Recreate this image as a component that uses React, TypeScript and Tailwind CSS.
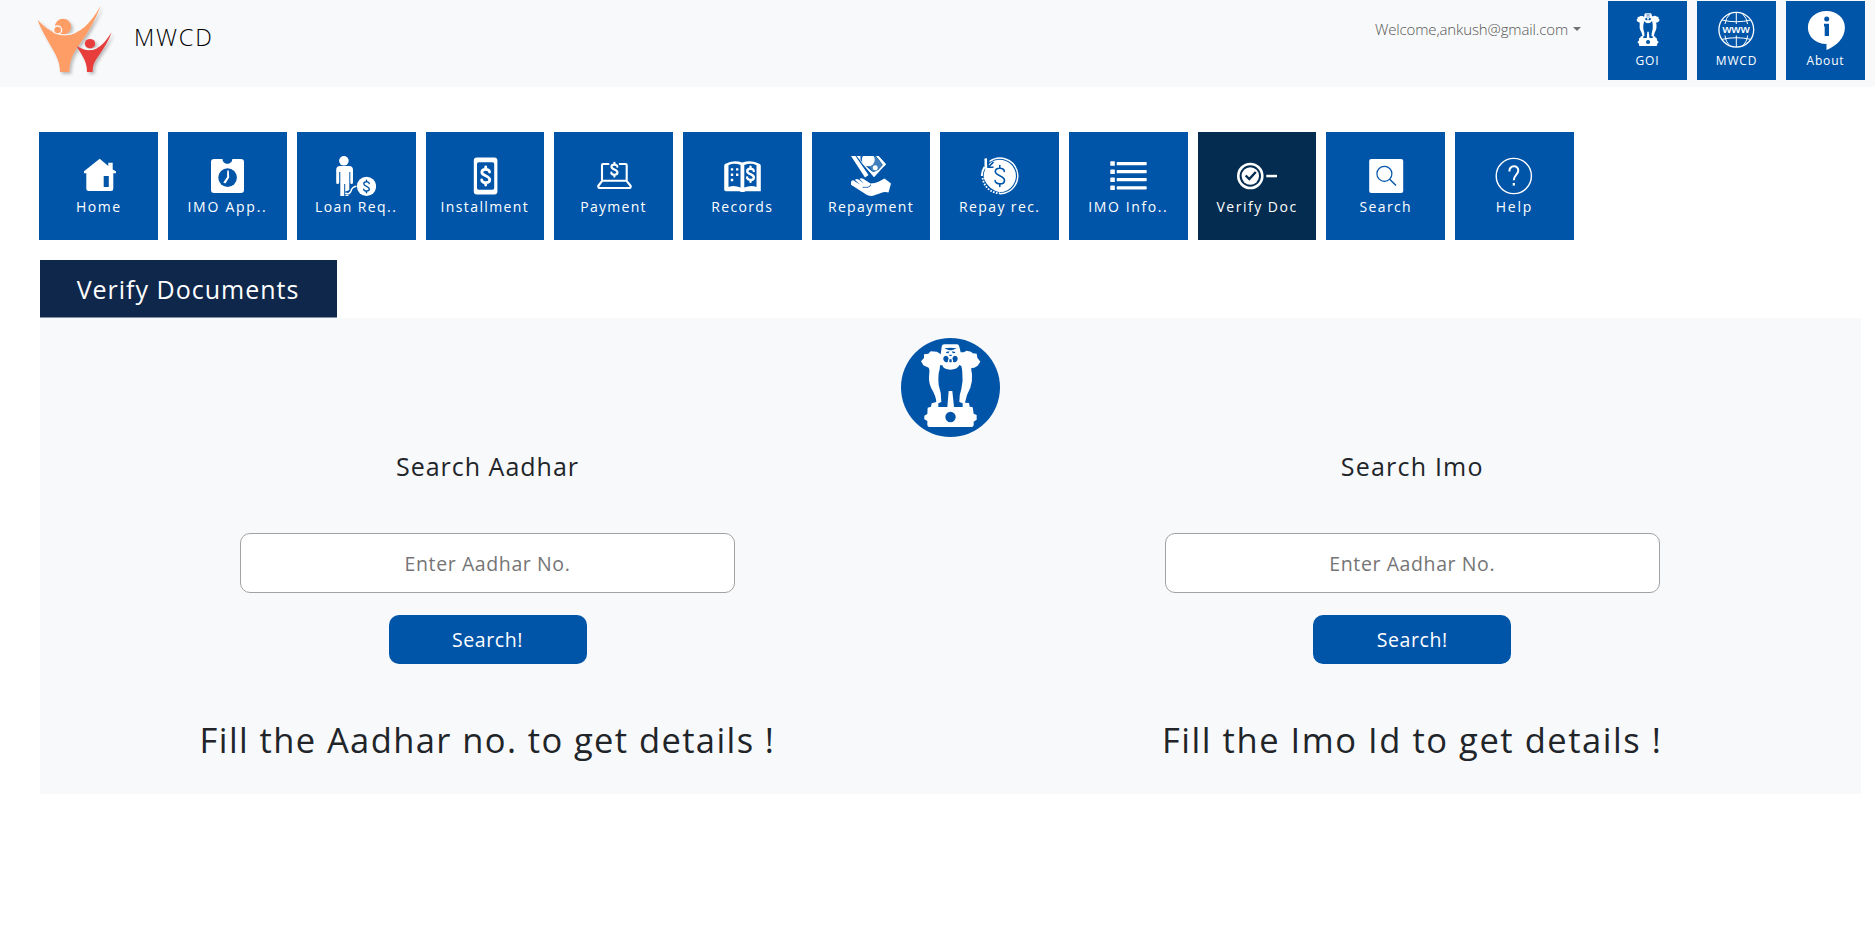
import React from "react";

const BLUE = "#0055a9";

function Logo() {
  return (
    <svg viewBox="105 9 240 222" className="block h-[74px] w-[80px]">
      <defs>
        <filter id="logo-shadow" x="-20%" y="-20%" width="140%" height="140%">
          <feDropShadow dx="6" dy="6" stdDeviation="5" floodColor="#333" floodOpacity="0.32" />
        </filter>
      </defs>
      <g filter="url(#logo-shadow)">
        <circle cx="189" cy="80" r="24" fill="#ff9d66" />
        <circle cx="173" cy="90" r="14" fill="#f8f9fa" />
        <circle cx="173" cy="90" r="10" fill="#ff9d66" />
        <path d="M113 59C135 84 158 101 195 106C238 104 271 72 302 17C284 67 258 105 239 132C217 164 209 181 208 216H180C180 182 166 162 146 127C127 92 118 76 113 59Z" fill="#ff9d66" />
        <path d="M160 97C178 107 210 107 228 96" fill="none" stroke="#f8f9fa" strokeWidth="3" />
      </g>
      <g filter="url(#logo-shadow)">
        <ellipse cx="270" cy="131" rx="15.500" ry="14" fill="#e73c3c" />
        <path d="M231 138C243 146 256 152 270 151C300 148 317 124 335 97C327 121 313 143 299 163C286 182 278 191 278 216H261C261 188 251 174 241 157C235 148 232 143 231 138Z" fill="#e73c3c" />
        <path d="M250 143C260 150 281 151 292 142" fill="none" stroke="#f8f9fa" strokeWidth="3" />
      </g>
    </svg>
  );
}

function EmblemShape() {
  return (
    <g>
      <path
        fill="#fff"
        d="M245 80Q246 73 253 73H290Q297 73 298 80L302 97L311 97L320 92L333 95L338 100L350 101L352 113L361 125L353 137L343 143L334 144Q333 152 336 161Q338 184 331 203Q318 226 315 248L327 249L329 260L338 262L341 281L350 285V299L341 305V315Q341 321 334 321H209Q202 321 202 315V303L193 298V287L202 282L203 263L213 260L215 250L229 246Q228 229 214 205Q204 184 208 159Q210 149 206 143L190 136L183 124L192 114V103L205 101L212 94L231 95L242 103Z"
      />
      <path
        fill={BLUE}
        d="M240 136L247 136Q251 149 271 149Q292 149 298 135L304 138Q306 144 307 158Q310 184 304 207Q297 226 298 246L308 250V261H282L277 213H266L262 261H235V250L244 246Q245 220 236 195Q234 176 236 160Q240 149 240 136Z"
      />
      <circle cx="271.500" cy="291" r="15.500" fill={BLUE} />
      <path d="M253 85Q271 81 290 85Q281 90 275 91H268Q262 90 253 85ZM258 96L268 94L266 100L259 99ZM276 94L286 96L285 99L278 100Z" fill={BLUE} />
      <path d="M250 113Q252 107 259 107Q265 108 266 116Q262 120 264 125Q258 129 253 124Q249 119 250 113ZM293 113Q291 107 284 107Q278 108 277 116Q281 120 279 125Q285 129 290 124Q294 119 293 113ZM268 104H275V108H268ZM268 118H275V127H268Z" fill={BLUE} />
    </g>
  );
}

/* Dollar sign centred on the given point */
function Dollar({ x, y, s, w, color = "#fff" }: { x: number; y: number; s: number; w: number; color?: string }) {
  return (
    <g transform={`translate(${x} ${y}) scale(${s})`} fill="none" stroke={color} strokeWidth={w / s} strokeLinecap="round">
      <path d="M4.500 -4.600C4.500 -8.800 -4.500 -8.800 -4.500 -4.400C-4.500 0.200 4.700 -0.600 4.700 4.400C4.700 8.900 -4.700 8.900 -4.700 4.500M0 -10.500V-7.800M0 7.800V10.500" />
    </g>
  );
}

const HomeIcon = (
  <g fill="#fff">
    <path d="M20.700 2.700L29.300 10V6.700H33.700V13.500L36.900 15.200V17.300H34.300V32.500Q34.300 35 32 35H9.700Q7.300 35 7.300 32.700V17.300H5V15.200Z" />
    <path d="M24.700 20H29.800V31H24.700Z" fill={BLUE} />
  </g>
);

const ApplicationIcon = (
  <g fill="#fff">
    <path d="M7 3H15.500C15.500 9.300 25.300 9.300 25.300 3H34Q37 3 37 6V34Q37 37 34 37H7Q4 37 4 34V6Q4 3 7 3Z" />
    <circle cx="20.600" cy="21.600" r="9.300" fill={BLUE} />
    <path d="M20.200 14.500H21.800L22.200 21.500L18.400 27.500L16.300 26.500L20.100 21Z" />
  </g>
);

const LoanIcon = (
  <g fill="#fff">
    <circle cx="7.900" cy="4.800" r="4.800" />
    <path d="M4 10H13Q17 10 17 14V26.500Q17 28 15.600 28Q14.300 28 14.300 26.500V16H13.300V34Q11 35 9.200 35.500V28H8.200V40H4.300V16H3.200V26.500Q3 28 1.500 28Q0.200 28 0.200 26.500V14Q0.200 10 4 10Z" />
    <circle cx="30.500" cy="30.400" r="9.600" />
    <path d="M9.300 37Q13.500 39 15 35Q16 31 20.500 30.300" fill="none" stroke="#fff" strokeWidth="1.500" />
    <path d="M9.300 39.300H12.500" stroke="#fff" strokeWidth="1.200" />
    <Dollar x={30.5} y={30.4} s={0.6} w={1.4} color={BLUE} />
  </g>
);

const InstallmentIcon = (
  <g>
    <rect x="8.800" y="1.400" width="23.600" height="37.200" rx="3" fill="#fff" />
    <rect x="12" y="6.300" width="17.200" height="27.400" rx="1.800" fill={BLUE} />
    <Dollar x={20.7} y={20} s={0.86} w={2.8} />
  </g>
);

const PaymentIcon = (
  <g fill="none" stroke="#fff" strokeWidth="2.100" strokeLinejoin="round" strokeLinecap="round">
    <path d="M14.500 8H9Q8 8 8 9V24M25.800 8H31.500Q32.700 8 32.700 9V24M8.300 24.700H32.400L36.700 30Q37 32 35 32H6Q4 32 4.200 30Z" />
    <Dollar x={20.4} y={13.7} s={0.65} w={2.2} />
  </g>
);

const RecordsIcon = (
  <g>
    <path d="M3 8Q11 3.500 20.300 6.500Q30 3.500 37.800 8Q38.800 8.500 38.800 10V35.200H23.500Q20.500 37 17.500 35.200H4Q2.200 35.200 2.200 33.500V10Q2.200 8.500 3 8Z" fill="#fff" />
    <path d="M6.500 9.300Q12 6.500 18.500 9V31.500Q12 28.700 6.500 31Z" fill={BLUE} />
    <path d="M22.300 9Q29 6.500 34.500 9.300V31Q29 28.700 22.300 31.500Z" fill={BLUE} />
    <path d="M8.800 12.200h2.400v2.400h-2.400zM14 12.200h2.400v2.400H14zM8.800 17.500h2.400v2.400h-2.400zM14 17.500h2.400v2.400H14zM8.800 22.800h2.400v2.400h-2.400z" fill="#fff" />
    <Dollar x={28.5} y={18.3} s={0.72} w={2.4} />
  </g>
);

const RepaymentIcon = (
  <g fill="#fff">
    <path d="M0 0H4.500L17.500 19L14 21.500ZM7.500 0H27.500L35 8.300L23 21L5.500 0Z" />
    <path d="M9.500 0H25L32.300 8.300L27.500 13.800L21 17.200L9.500 4Z" fill={BLUE} />
    <path d="M10.500 0H11.500Q11 10.500 19 10.300Q23.500 9 23.500 2V0H24.500L31.500 8.500L26 15L23.500 17.500L20.500 14Z" fillOpacity="0.25" />
    <circle cx="17.300" cy="3.800" r="6.500" />
    <circle cx="24.200" cy="11.700" r="2.500" />
    <path d="M25.500 0H27.500L35 8.300L33 10.500Z" />
    <path d="M9 5L23 21L29 14.500L26 15.300Q23.500 17.500 20.500 15L12 7.500Z" />
    <path d="M1 24.500Q2.500 23.800 4 25.500L9 28.500L4 24Q5 22.300 7.500 23.500L13 27.500L8.500 23Q10 21.500 12.500 23L19.500 27.500Q24 27.500 28 25.500L33.500 22.500L40 27.500L37.500 36.500Q33.500 35.500 30 37L22 39.800Q19 40.200 16 39L0 28.800Q-0.500 26 1 24.500Z" />
    <path d="M11.500 31.300H17Q20 30.500 19.500 28.500" fill="none" stroke={BLUE} strokeWidth="0.800" />
  </g>
);

const RepayRecordIcon = (
  <g>
    <path d="M9.500 5.500A17.800 17.800 0 1 1 20 37.700" fill="none" stroke="#fff" strokeWidth="1.400" />
    <path d="M8 8.800A16.200 16.200 0 1 1 19.800 36.200Q9 34 4 23Q2.500 16 8 8.800Z" fill="#fff" />
    <path d="M4.500 11A18 18 0 0 0 1.800 20" fill="none" stroke="#fff" strokeWidth="2" />
    <path d="M2.600 22A17.500 17.500 0 0 0 20 37.300" fill="none" stroke="#fff" strokeWidth="1.800" strokeDasharray="1.700 1.300" />
    <rect x="4.500" y="2.200" width="2.600" height="10.500" rx="1" fill="#fff" />
    <path d="M8 3V11.300H13.500M8.300 11L13.500 6.200" fill="none" stroke={BLUE} strokeWidth="1.600" />
    <Dollar x={19.8} y={20} s={1} w={1.6} color={BLUE} />
  </g>
);

const InfoListIcon = (
  <g fill="#fff">
    {[5.3, 13.4, 21.4, 29.6].map((y) => (
      <React.Fragment key={y}>
        <rect x="2.300" y={y} width="4.500" height="4.500" rx="0.500" />
        <rect x="8.700" y={y + 0.7} width="30" height="3.200" rx="0.700" />
      </React.Fragment>
    ))}
  </g>
);

const VerifyIcon = (
  <g>
    <circle cx="13.300" cy="20" r="12" fill="none" stroke="#fff" strokeWidth="2.600" />
    <circle cx="13.300" cy="20" r="8.700" fill="#fff" />
    <path d="M8.700 19.500L12.300 23L18.800 16" fill="none" stroke="#042c50" strokeWidth="2.400" />
    <rect x="29.300" y="18.800" width="10.700" height="2.500" fill="#fff" />
  </g>
);

const SearchIcon = (
  <g>
    <rect x="3.200" y="3" width="34" height="34" rx="2" fill="#fff" />
    <circle cx="18.400" cy="17.800" r="7.500" fill="none" stroke={BLUE} strokeWidth="1.200" />
    <path d="M23.700 23.200L30 29.600" stroke={BLUE} strokeWidth="1.400" />
  </g>
);

const HelpIcon = (
  <g fill="none" stroke="#fff">
    <circle cx="19.800" cy="20" r="17.600" strokeWidth="1.400" />
    <path d="M15.400 15.500C15.400 8.700 24.300 8.700 24.300 14.600C24.300 18.500 19.800 19 19.800 24.300" strokeWidth="2" />
    <path d="M19.800 27V29.600" strokeWidth="2.200" />
  </g>
);

const GoiIcon = (
  <svg x="8.300" y="3" width="23.600" height="33.200" viewBox="182 72 180 251" preserveAspectRatio="none">
    <EmblemShape />
  </svg>
);

const WebIcon = (
  <g fill="none" stroke="#fff" strokeWidth="1.300">
    <circle cx="19.300" cy="19.700" r="17.400" />
    <path d="M19.300 2.300V14M19.300 25.500V37M4.800 10Q19.300 13.500 33.800 10M4.800 29.400Q19.300 26 33.800 29.400M13.500 3.300Q8.500 8 8 14M25.100 3.300Q30.100 8 30.600 14M8 25.500Q8.500 32 13.500 36.100M30.600 25.500Q30.100 32 25.100 36.100" strokeWidth="1" />
    <text x="19.400" y="23" textAnchor="middle" textLength="28.500" fill="#fff" stroke="none" className="font-['Open_Sans',sans-serif] text-[11.500px] font-semibold">
      www
    </text>
  </g>
);

const AboutIcon = (
  <g>
    <path d="M20.400 1C31 1 38.900 8 38.900 17.500C38.900 28 31 35.500 20.500 40V34C10 34 1.900 27 1.900 17.500C1.900 8 10 1 20.400 1Z" fill="#fff" />
    <circle cx="20.700" cy="9" r="2.500" fill={BLUE} />
    <path d="M18 13.700H23V26H18.700V16.500H18Z" fill={BLUE} />
  </g>
);

function Icon({ children }: { children: React.ReactNode }) {
  return (
    <svg viewBox="0 0 40 40" className="block size-10 shrink-0">
      {children}
    </svg>
  );
}

const navItems: { label: string; icon: React.ReactNode; tracking: string; active?: boolean }[] = [
  { label: "Home", icon: HomeIcon, tracking: "tracking-[1.5px]" },
  { label: "IMO App..", icon: ApplicationIcon, tracking: "tracking-[1.75px]" },
  { label: "Loan Req..", icon: LoanIcon, tracking: "tracking-[1.4px]" },
  { label: "Installment", icon: InstallmentIcon, tracking: "tracking-[1.38px]" },
  { label: "Payment", icon: PaymentIcon, tracking: "tracking-[1.3px]" },
  { label: "Records", icon: RecordsIcon, tracking: "tracking-[1.35px]" },
  { label: "Repayment", icon: RepaymentIcon, tracking: "tracking-[1.3px]" },
  { label: "Repay rec.", icon: RepayRecordIcon, tracking: "tracking-[1.38px]" },
  { label: "IMO Info..", icon: InfoListIcon, tracking: "tracking-[1.6px]" },
  { label: "Verify Doc", icon: VerifyIcon, tracking: "tracking-[1.5px]", active: true },
  { label: "Search", icon: SearchIcon, tracking: "tracking-[1.35px]" },
  { label: "Help", icon: HelpIcon, tracking: "tracking-[1.8px]" },
];

const headerLinks = [
  { label: "GOI", icon: GoiIcon },
  { label: "MWCD", icon: WebIcon },
  { label: "About", icon: AboutIcon },
];

function SearchColumn({ title, titleTracking, message, messageTracking, width }: { title: string; titleTracking: string; message: string; messageTracking: string; width: string }) {
  return (
    <div className={`flex shrink-0 flex-col items-center ${width}`}>
      <h4 className={`text-[25px] leading-[30px] ${titleTracking}`}>{title}</h4>
      <input
        type="text"
        placeholder="Enter Aadhar No."
        className="mt-[52px] block h-[60px] w-[495px] rounded-[10px] border border-[#a2a2a2] bg-white text-center text-[19.500px] tracking-[0.6px] outline-none placeholder:text-[#757575]"
      />
      <button className="mt-[22px] block h-[49px] w-[198px] rounded-[10px] bg-[#0055a9] pt-px text-[19.500px] tracking-[0.6px] text-white">Search!</button>
      <h2 className={`mt-[51px] whitespace-nowrap text-[34.500px] leading-[50px] ${messageTracking}`}>{message}</h2>
    </div>
  );
}

export default function App() {
  return (
    <div className="min-h-[947px] w-full overflow-hidden bg-white font-['Open_Sans',sans-serif] text-[#212529]">
      <header className="flex h-[87px] items-start bg-[#f8f9fa] pl-[35px] pr-[10px]">
        <div className="pt-[3px]">
          <Logo />
        </div>
        <span className="ml-[19px] mt-[19px] text-[23.500px] font-light leading-9 tracking-[1.8px] text-black">MWCD</span>
        <div className="ml-auto mt-[17px] flex items-center text-[15px] font-light leading-6 tracking-[-0.13px] text-[#555]">
          Welcome,ankush@gmail.com
          <span className="ml-[5px] border-x-[4px] border-t-[4px] border-x-transparent border-t-[#707070]" />
        </div>
        <nav className="ml-[27px] mt-px flex gap-[10px]">
          {headerLinks.map((l) => (
            <a key={l.label} className="flex h-[79px] w-[79px] flex-col items-center bg-[#0055a9] pt-[9px] text-[12px] font-medium leading-[22px] tracking-[0.8px] text-white">
              <Icon>{l.icon}</Icon>
              {l.label}
            </a>
          ))}
        </nav>
      </header>

      <nav className="ml-[39.4px] mt-[45px] flex w-[1534.4px] gap-[10px]">
        {navItems.map((item) => (
          <a
            key={item.label}
            className={`flex h-[108px] flex-1 flex-col items-center pt-6 text-[14px] leading-[21px] text-white ${item.tracking} ${item.active ? "bg-[#042c50]" : "bg-[#0055a9]"}`}
          >
            <Icon>{item.icon}</Icon>
            {item.label}
          </a>
        ))}
      </nav>

      <main className="ml-10 mt-5 w-[1821px]">
        <h3 className="h-[58px] w-[297px] border-b border-[#8390a3] bg-[#0f274a] pr-px text-center text-[25px] leading-[58px] tracking-[1px] text-white">Verify Documents</h3>
        <section className="h-[476px] bg-[#f8f9fa] pt-5">
          <svg viewBox="123 54 297 297" className="mx-auto block size-[99px]">
            <circle cx="271.500" cy="202.500" r="148.500" fill={BLUE} />
            <EmblemShape />
          </svg>
          <div className="-mx-[15px] mt-[14px] flex">
            <SearchColumn width="w-[925px]" title="Search Aadhar" titleTracking="tracking-[1px]" message="Fill the Aadhar no. to get details !" messageTracking="tracking-[1.4px]" />
            <SearchColumn width="w-[924.5px]" title="Search Imo" titleTracking="tracking-[1.2px]" message="Fill the Imo Id to get details !" messageTracking="tracking-[1.55px]" />
          </div>
        </section>
      </main>
    </div>
  );
}
